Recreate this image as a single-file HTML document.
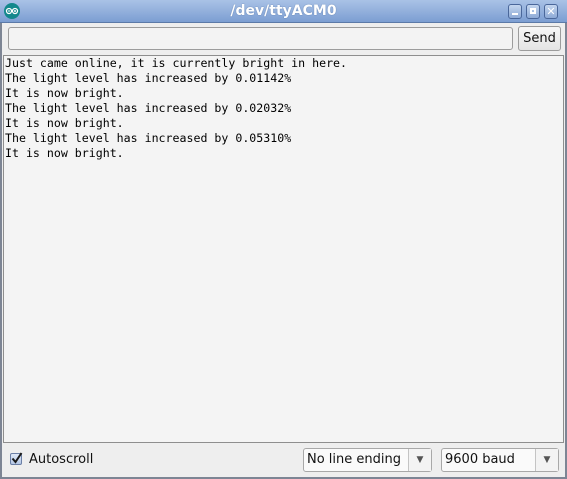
<!DOCTYPE html>
<html><head><meta charset="utf-8"><style>
*{margin:0;padding:0;box-sizing:border-box}
body{width:567px;height:479px;overflow:hidden;background:#f0f0f0;font-family:"DejaVu Sans","Liberation Sans",sans-serif;position:relative}
.abs{position:absolute}
#title{left:0;top:0;width:567px;height:23px;background:linear-gradient(#a9c2e6,#7c9ed2);border-bottom:1px solid #5c7aa8}
#title .t{position:absolute;left:0;right:0;top:3px;text-align:center;color:#fff;font-size:14px;font-weight:bold;text-shadow:0 0 1px #4a6a9a}
.wb{position:absolute;top:4px;width:14px;height:15px;border:1px solid #4a679a;border-radius:3px;background:linear-gradient(#c4d6ef,#8eaad6)}
#frame{left:0;top:23px;width:567px;height:456px;border-left:2px solid #7d8594;border-right:2px solid #7d8594;border-bottom:2px solid #7d8594;background:#eeeeee}
#inp{left:8px;top:27px;width:505px;height:23px;border:1px solid #9c9c9c;border-radius:3px;background:#f3f3f3}
#send{left:518px;top:26px;width:43px;height:25px;border:1px solid #9c9c9c;border-radius:3px;background:linear-gradient(#f7f7f7,#e4e4e4);font-size:13px;text-align:center;line-height:23px;color:#111}
#ta{left:3px;top:55px;width:561px;height:388px;border:1px solid #8e8e8e;background:#f4f4f4;padding:0 0 0 1px;font-family:"DejaVu Sans Mono","Liberation Mono",monospace;font-size:11.6px;line-height:15px;white-space:pre;color:#000}
.cb{position:absolute;height:24px;border:1px solid #a8a8a8;border-radius:3px;background:#fafafa;font-size:13px;line-height:22px;padding-left:3px;color:#111}
.cb .ar{position:absolute;right:0;top:0;width:23px;height:22px;border-left:1px solid #c4c4c4;background:#f3f3f3;font-size:9px;text-align:center;color:#555}
</style></head><body>
<div id="title" class="abs">
 <svg class="abs" style="left:4px;top:3px" width="16" height="16" viewBox="0 0 16 16"><circle cx="8" cy="8" r="8" fill="#13888c"/><circle cx="5" cy="8" r="2.5" fill="none" stroke="#fff" stroke-width="1.3"/><circle cx="11" cy="8" r="2.5" fill="none" stroke="#fff" stroke-width="1.3"/><path d="M4 8h2M10 8h2M11 7v2" stroke="#fff" stroke-width="1"/></svg>
 <div class="t">/dev/ttyACM0</div>
 <div class="wb" style="left:508px"><div style="position:absolute;left:3px;top:8px;width:6px;height:2px;background:#fff"></div></div>
 <div class="wb" style="left:526px"><div style="position:absolute;left:3px;top:3px;width:6px;height:6px;border:2px solid #fff"></div></div>
 <div class="wb" style="left:544px;color:#fff;font-size:11px;font-weight:bold;text-align:center;line-height:13px">✕</div>
</div>
<div id="frame" class="abs"></div>
<div id="inp" class="abs"></div>
<div id="send" class="abs">Send</div>
<div id="ta" class="abs">Just came online, it is currently bright in here.
The light level has increased by 0.01142%
It is now bright.
The light level has increased by 0.02032%
It is now bright.
The light level has increased by 0.05310%
It is now bright.</div>
<div class="abs" style="left:10px;top:453px;width:12px;height:12px;border:1px solid #6b7fa6;background:linear-gradient(#dfe8f6,#b5c7e6);border-radius:2px"></div>
<svg class="abs" style="left:10px;top:451px" width="14" height="14" viewBox="0 0 14 14"><path d="M2.5 7.5l3 3.5 6-9" fill="none" stroke="#1a1a1a" stroke-width="2"/></svg>
<div class="abs" style="left:29px;top:452px;font-size:13px;color:#111">Autoscroll</div>
<div class="cb" style="left:303px;top:448px;width:129px">No line ending<div class="ar">▼</div></div>
<div class="cb" style="left:441px;top:448px;width:118px">9600 baud<div class="ar">▼</div></div>
</body></html>
